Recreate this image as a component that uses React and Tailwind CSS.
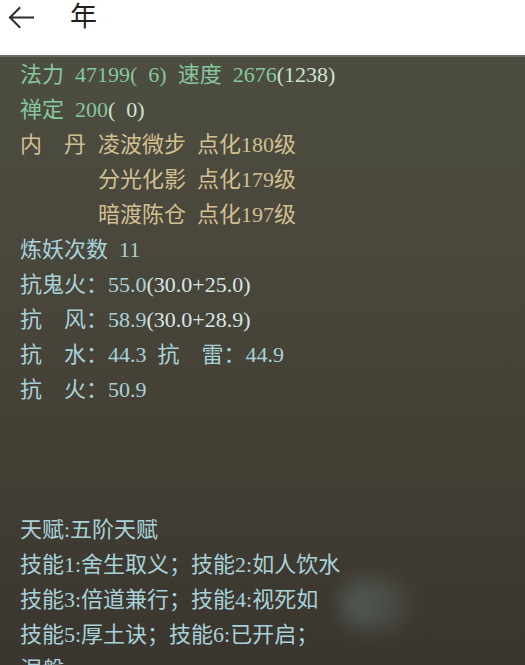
import React from "react";

const GREEN = "text-[#86c79c]";
const GREEN_LIGHT = "text-[#cfe3d2]";
const GOLD = "text-[#d2bf90]";
const CYAN = "text-[#a8d2da]";
const CYAN_LIGHT = "text-[#d6e6e6]";

const E = "\u2002"; // half-width gap
const F = "\u3000"; // full-width gap

function Line({ children, className = "" }) {
  return <div className={`h-[35px] leading-[35px] whitespace-pre ${className}`}>{children}</div>;
}

export default function App() {
  return (
    <div
      className="w-[525px] h-[665px] overflow-hidden bg-white"
      style={{ fontFamily: '"Liberation Serif", "Noto Sans CJK SC", serif' }}
    >
      {/* top bar */}
      <div className="h-[55px] bg-white flex items-start">
        <svg width="44" height="32" viewBox="0 0 44 32" className="mt-[1px] shrink-0">
          <path d="M10 16.5 H33 M19.5 7 L10 16.5 L19.5 26" fill="none" stroke="#2b2b2b" strokeWidth="2" strokeLinecap="square" />
        </svg>
        <span
          className="ml-[26px] mt-[1px] text-[27px] leading-[28px] text-[#1f1f1f]"
          style={{ fontFamily: '"Noto Sans CJK SC", sans-serif' }}
        >
          年
        </span>
      </div>

      {/* stats panel */}
      <div className="relative h-[610px] border-t-2 border-[#6a6a60] bg-[linear-gradient(180deg,#4c4d40_0%,#4a473c_30%,#433f35_65%,#3a362f_100%)] pl-[20px] text-[22px]">
        <Line className={GREEN}>
          法力{E}47199({E}6){E}速度{E}2676<span className={GREEN_LIGHT}>(1238)</span>
        </Line>
        <Line className={GREEN}>
          禅定{E}200<span className={GREEN_LIGHT}>({E}0)</span>
        </Line>
        <Line className={GOLD}>
          <span className="inline-block w-[78px]">内{F}丹</span>凌波微步{E}点化180级
        </Line>
        <Line className={`${GOLD} pl-[78px]`}>分光化影{E}点化179级</Line>
        <Line className={`${GOLD} pl-[78px]`}>暗渡陈仓{E}点化197级</Line>
        <Line className={CYAN}>炼妖次数{E}11</Line>
        <Line className={CYAN}>
          抗鬼火：55.0<span className={CYAN_LIGHT}>(30.0+25.0)</span>
        </Line>
        <Line className={CYAN}>
          抗{F}风：58.9<span className={CYAN_LIGHT}>(30.0+28.9)</span>
        </Line>
        <Line className={CYAN}>抗{F}水：44.3{E}抗{F}雷：44.9</Line>
        <Line className={CYAN}>抗{F}火：50.9</Line>
        <Line />
        <Line />
        <Line />
        <Line className={CYAN}>天赋:五阶天赋</Line>
        <Line className={CYAN}>技能1:舍生取义；技能2:如人饮水</Line>
        <Line className={CYAN}>技能3:倍道兼行；技能4:视死如</Line>
        <Line className={CYAN}>技能5:厚土诀；技能6:已开启；</Line>
        <Line className={CYAN}>涅槃</Line>

        {/* soft glare over the lower right text */}
        <div className="absolute left-[342px] top-[522px] w-[70px] h-[50px] rounded-[24px] bg-[linear-gradient(90deg,#6a8482,#4a4a42)] opacity-50 blur-[10px]" />
      </div>
    </div>
  );
}
